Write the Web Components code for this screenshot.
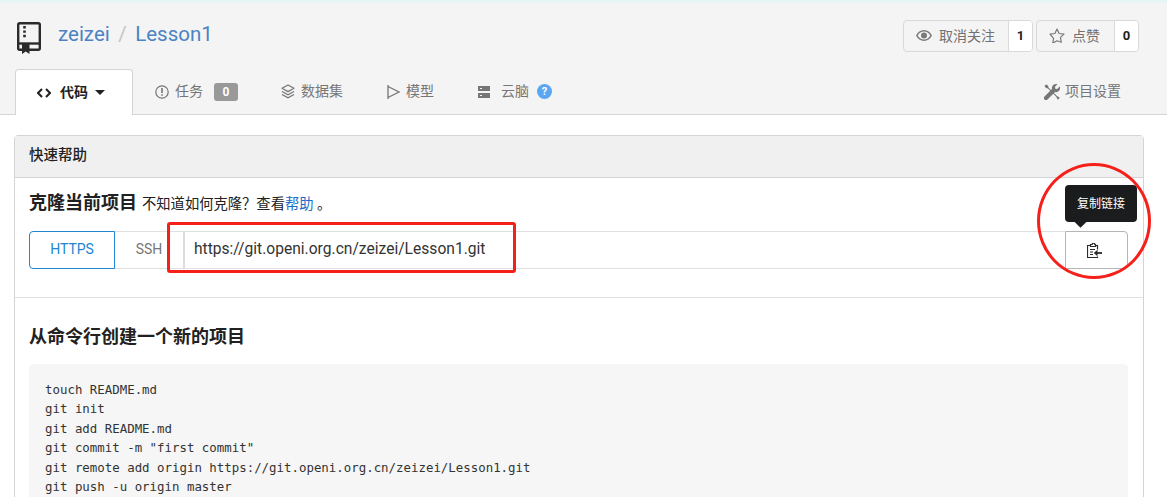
<!DOCTYPE html>
<html lang="zh">
<head>
<meta charset="utf-8">
<title>Lesson1</title>
<style>
html, body { margin: 0; height: 497px; overflow: hidden; background: #fff; }
body { font: 14px "Roboto", "Noto Sans CJK SC", sans-serif; color: #212121; }
</style>
</head>
<body>

<repo-page>
    <repo-header slot="header"></repo-header>
    <quick-help></quick-help>
</repo-page>

<script>
const FONT = '"Roboto", "Noto Sans CJK SC", sans-serif';

customElements.define('repo-page', class extends HTMLElement {
    constructor() {
        super();
        this.attachShadow({ mode: 'open' }).innerHTML = `
        <style>
        :host { display: block; position: relative; width: 1167px; height: 497px; overflow: hidden; }
        #strip { height: 3px; background: #e8f4f6; }
        #body { padding: 20px 23px 0 14px; }
        #mark-rect {
            position: absolute; left: 167px; top: 222px; width: 343px; height: 45px;
            border: 3px solid #f5201a; border-radius: 3px;
        }
        #mark-circle {
            position: absolute; left: 1037px; top: 163px; width: 108px; height: 110px;
            border: 3px solid #f5201a; border-radius: 50%;
        }
        </style>
        <div id="strip"></div>
        <slot name="header"></slot>
        <div id="body"><slot></slot></div>
        <div id="mark-rect"></div>
        <div id="mark-circle"></div>
        `;
    }
});

customElements.define('count-button', class extends HTMLElement {
    constructor() {
        super();
        this.attachShadow({ mode: 'open' }).innerHTML = `
        <style>
        :host { display: inline-flex; height: 32px; box-sizing: border-box; border: 1px solid #d9d9d9; border-radius: 4px; font: 14px ${FONT}; }
        #label { display: flex; align-items: center; gap: 7px; padding: 0 var(--pad-right, 14px) 2px 12px; color: #717171; border-right: 1px solid #d9d9d9; }
        #count { display: flex; align-items: center; justify-content: center; width: 23px; padding-bottom: 1px; box-sizing: border-box; background: #fff; color: #212121; font-weight: 700; font-size: 13px; border-radius: 0 3px 3px 0; }
        ::slotted(svg) { display: block; }
        </style>
        <div id="label"><slot name="icon"></slot><slot></slot></div>
        <div id="count"></div>
        `;
    }
    connectedCallback() {
        this.shadowRoot.querySelector('#count').textContent = this.getAttribute('count');
    }
});

customElements.define('repo-tab', class extends HTMLElement {
    constructor() {
        super();
        this.attachShadow({ mode: 'open' }).innerHTML = `
        <style>
        :host { display: flex; align-items: center; gap: 6px; box-sizing: border-box; height: 45px; padding-bottom: 3px; font: 14px ${FONT}; color: #767676; }
        :host([active]) {
            height: 46px; margin-bottom: -1px; width: 118px; padding-left: 21px;
            background: #fff; color: #212121; font-weight: 700; gap: 8px;
            border: 1px solid #d4d4d5; border-bottom: 0; border-radius: 4px 4px 0 0;
        }
        ::slotted(svg) { display: block; flex: none; margin-top: 3px; }
        </style>
        <slot></slot>
        `;
    }
});

customElements.define('repo-header', class extends HTMLElement {
    constructor() {
        super();
        this.attachShadow({ mode: 'open' }).innerHTML = `
        <style>
        :host { display: block; background: #f4f4f4; border-bottom: 1px solid #d4d4d5; height: 111px; font-family: ${FONT}; }
        #top { display: flex; align-items: center; justify-content: space-between; height: 66px; padding: 0 28px 0 17px; box-sizing: border-box; }
        #title { display: flex; align-items: center; font-size: 20.5px; color: #4b83c4; }
        #title svg { margin: 3px 17px 0 0; }
        #title span, #title i { position: relative; top: -2px; }
        #title i { font-style: normal; color: #c4c4c4; margin: 0 8.5px; }
        #actions { display: flex; gap: 3px; }
        #watch { --pad-right: 13px; }
        #tabs { display: flex; align-items: center; padding: 0 46px 0 15px; height: 45px; }
        repo-tab.task { margin-left: 22px; }
        repo-tab.data { margin-left: 43px; }
        repo-tab.model { margin-left: 44px; }
        repo-tab.cloud { margin-left: 44px; }
        repo-tab.settings { margin-left: auto; gap: 5px; }
        .badge { background: #999; color: #fff; font-weight: 700; font-size: 12px; border-radius: 3px; width: 24px; height: 18px; margin-top: 3px; display: inline-flex; align-items: center; justify-content: center; margin-left: 5px; }
        .help { margin: 3px 0 0 2px; width: 15px; height: 15px; border-radius: 50%; background: #5ba6f2; color: #fff; font-weight: 700; font-size: 11px; display: inline-flex; align-items: center; justify-content: center; }
        #code-icon { margin-right: 1px; }
        #caret { margin-left: -1px; }
        </style>
        <div id="top">
            <div id="title">
                <svg width="24" height="32" viewBox="0 0 24 32" fill="none" stroke="#2b2b2b">
                    <rect x="1.200" y="1.200" width="21.600" height="26.600" rx="1.500" stroke-width="2.400"/>
                    <path stroke-width="2.400" d="M1 21.500h22"/>
                    <path stroke-width="2.600" stroke-dasharray="2.400 2" d="M7.500 4v13"/>
                    <path fill="#2b2b2b" stroke="#f4f4f4" stroke-width="0" d="M5 22h7.500v10l-3.750-2.500L5 32z"/>
                </svg>
                <span>zeizei</span><i>/</i><span>Lesson1</span>
            </div>
            <div id="actions">
                <count-button id="watch" count="1">
                    <svg slot="icon" width="16" height="11" viewBox="0 0 16 11"><path fill="#7a7a7a" fill-rule="evenodd" d="M8 0c3.500 0 6.400 2.300 8 5.500C14.400 8.700 11.500 11 8 11S1.600 8.700 0 5.500C1.600 2.300 4.500 0 8 0zm0 1.500C5.300 1.500 3.200 3.100 1.700 5.500 3.200 7.900 5.300 9.500 8 9.500s4.800-1.600 6.300-4C12.800 3.100 10.700 1.500 8 1.500zM8 2.500a3 3 0 1 1 0 6 3 3 0 0 1 0-6z"/></svg>
                    取消关注
                </count-button>
                <count-button count="0">
                    <svg slot="icon" width="16" height="15" viewBox="0 0 16 15"><path fill="none" stroke="#7a7a7a" stroke-width="1.200" stroke-linejoin="round" d="M8 1l2.100 4.500 4.900.600-3.600 3.300.900 4.800L8 12.800l-4.300 2.400.9-4.800L1 6.100l4.900-.6z"/></svg>
                    点赞
                </count-button>
            </div>
        </div>
        <div id="tabs">
            <repo-tab active>
                <svg id="code-icon" width="14" height="10" viewBox="0 0 14 10" fill="none" stroke="#212121" stroke-width="2"><path d="M5 1L1 5l4 4M9 1l4 4-4 4"/></svg>
                代码
                <svg id="caret" width="10" height="5" viewBox="0 0 10 5"><path fill="#212121" d="M0 0h10L5 5z"/></svg>
            </repo-tab>
            <repo-tab class="task">
                <svg width="14" height="14" viewBox="0 0 14 14"><circle cx="7" cy="7" r="6.200" fill="none" stroke="#767676" stroke-width="1.200"/><path fill="#767676" d="M6.200 3h1.600v5H6.200zM6.200 9.200h1.600v1.600H6.200z"/></svg>
                任务<span class="badge">0</span>
            </repo-tab>
            <repo-tab class="data">
                <svg width="14" height="15" viewBox="0 0 14 15" fill="none" stroke="#767676" stroke-width="1.200"><path stroke-linejoin="round" d="M7 1l6 3.300-6 3.300-6-3.300z"/><path d="M1 7.500l6 3.300 6-3.300M1 10.500l6 3.300 6-3.300"/></svg>
                数据集
            </repo-tab>
            <repo-tab class="model">
                <svg width="13" height="14" viewBox="0 0 13 14" fill="none" stroke="#767676" stroke-width="1.300"><path d="M1 0v14M1 1.500L12 7 1 12.500"/></svg>
                模型
            </repo-tab>
            <repo-tab class="cloud">
                <svg width="12" height="12" viewBox="0 0 12 12" style="margin-right:5px"><path fill="#767676" d="M0 0h12v5H0zM0 7h12v5H0z"/><path fill="#f4f4f4" d="M2 2h2v1H2zM2 9h2v1H2z"/></svg>
                云脑<span class="help">?</span>
            </repo-tab>
            <repo-tab class="settings">
                <svg width="16" height="16" viewBox="0 0 16 16" fill="#767676">
                    <path d="M.5 2L2 .5l2 1 .5 2L13 12l2.500 1.500-.5 1.500-1.500.5L12.500 13 4 4.500l-2-.5z"/>
                    <path d="M12 0a4 4 0 0 1 1.500.3L11 2.800l.3 1.900 1.900.3 2.500-2.500A4 4 0 0 1 11 8L3.500 15.500a1.500 1.500 0 0 1-3-3L8 5a4 4 0 0 1 4-5z"/>
                </svg>
                项目设置
            </repo-tab>
        </div>
        `;
    }
});

customElements.define('copy-button', class extends HTMLElement {
    constructor() {
        super();
        this.attachShadow({ mode: 'open' }).innerHTML = `
        <style>
        :host { display: flex; position: relative; align-items: center; justify-content: center; box-sizing: border-box; width: 63px; height: 38px; border: 1px solid #b5b5b5; border-radius: 0 4px 4px 0; background: #fff; }
        #tip { position: absolute; left: -1px; top: -47px; width: 72px; height: 37px; box-sizing: border-box; padding-bottom: 2px; background: #1b1c1d; color: #fff; border-radius: 4px; font: 12px ${FONT}; display: flex; align-items: center; justify-content: center; white-space: nowrap; }
        #tip::after { content: ""; position: absolute; left: 11px; bottom: -4px; width: 9px; height: 9px; background: #1b1c1d; transform: rotate(45deg); }
        svg { margin: 0 5px 0 0; }
        </style>
        <div id="tip">复制链接</div>
        <svg width="15" height="15" viewBox="0 0 15 15" fill="none" stroke="#2b2b2b" stroke-width="1.200">
            <path d="M8.500 2.500h2v4M3.500 2.500h-3v12h10v-1"/>
            <path d="M3.500 3.500v-2h1.700a1.300 1.300 0 0 1 2.600 0h.7v2z"/>
            <path d="M3 6.500h5M3 9h3M3 11.500h3"/>
            <path stroke-width="1.800" d="M15 10H9"/>
            <path fill="#2b2b2b" stroke="none" d="M10.500 6.800v6.400L6.800 10z"/>
        </svg>
        `;
    }
});

customElements.define('clone-bar', class extends HTMLElement {
    constructor() {
        super();
        this.attachShadow({ mode: 'open' }).innerHTML = `
        <style>
        :host { display: flex; height: 38px; font: 14px ${FONT}; margin-top: 18px; }
        button { font: inherit; background: #fff; margin: 0; padding: 0 0 2px; height: 38px; box-sizing: border-box; cursor: pointer; }
        #https { width: 86px; border: 1px solid #2185d0; border-radius: 4px 0 0 4px; color: #2185d0; }
        #ssh { width: 68px; border: 1px solid #e0e0e0; border-width: 1px 0; color: #767676; }
        #url { flex: 1; box-sizing: border-box; height: 38px; display: flex; align-items: center; padding: 0 0 2px 9px; font-size: 15.600px; color: #333; border: 1px solid #e0e0e0; border-left: 2px solid #dcdcdc; border-right: 0; }
        </style>
        <button id="https">HTTPS</button>
        <button id="ssh">SSH</button>
        <div id="url">https://git.openi.org.cn/zeizei/Lesson1.git</div>
        <copy-button></copy-button>
        `;
    }
});

customElements.define('quick-help', class extends HTMLElement {
    constructor() {
        super();
        this.attachShadow({ mode: 'open' }).innerHTML = `
        <style>
        :host { display: block; box-sizing: border-box; height: 400px; border: 1px solid #d4d4d5; border-radius: 4px 4px 0 0; font-family: ${FONT}; color: #212121; }
        #head { height: 42px; box-sizing: border-box; background: #f0f0f0; border-bottom: 1px solid #d4d4d5; display: flex; align-items: center; padding: 0 0 6px 14px; font-size: 14.500px; font-weight: 500; }
        #clone { box-sizing: border-box; height: 120px; padding: 10px 15px 0 14px; border-bottom: 1px solid #e0e0e0; }
        #clone-title { display: flex; align-items: baseline; font-size: 14.300px; height: 25px; }
        #clone-title b { font-size: 18px; margin-right: 5px; }
        #clone-title a { color: #1a6dc8; text-decoration: none; }
        #new { padding: 26px 15px 0 14px; }
        h2 { margin: 0 0 14px; font-size: 18px; line-height: 26px; font-weight: 700; }
        pre { margin: 0; padding: 15.500px 16px 0; height: 160px; box-sizing: border-box; background: #f6f6f6; border-radius: 4px; font: 12.420px/19.500px "DejaVu Sans Mono", monospace; color: #333; }
        </style>
        <div id="head">快速帮助</div>
        <div id="clone">
            <div id="clone-title"><b>克隆当前项目</b>不知道如何克隆？查看<a href="#">帮助</a>&nbsp;。</div>
            <clone-bar></clone-bar>
        </div>
        <div id="new">
            <h2>从命令行创建一个新的项目</h2>
            <pre>touch README.md
git init
git add README.md
git commit -m "first commit"
git remote add origin https://git.openi.org.cn/zeizei/Lesson1.git
git push -u origin master</pre>
        </div>
        `;
    }
});
</script>
</body>
</html>
